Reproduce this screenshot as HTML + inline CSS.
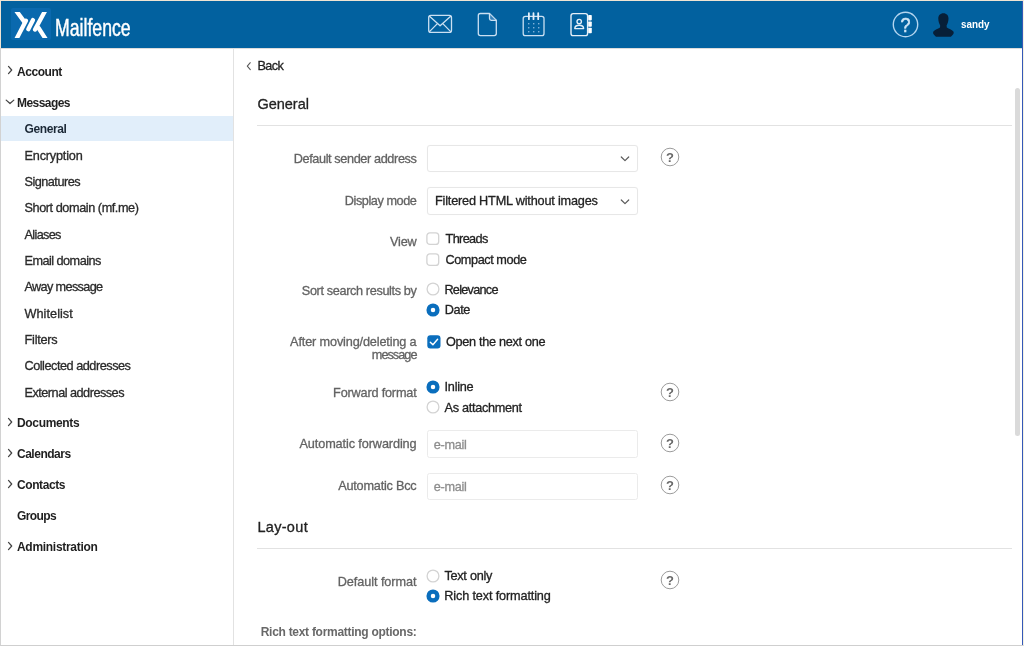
<!DOCTYPE html>
<html lang="en"><head><meta charset="utf-8"><title>Mailfence - Settings</title>
<style>
html,body{margin:0;padding:0;}
body{width:1024px;height:646px;overflow:hidden;position:relative;background:#fff;font-family:"Liberation Sans", sans-serif;}
.t{position:absolute;white-space:nowrap;line-height:16px;height:16px;-webkit-text-stroke:0.3px currentColor;}
.ab,.help{position:absolute;display:block;}
#app{position:absolute;left:0;top:0;width:1024px;height:646px;overflow:hidden;will-change:transform;}
#frame{position:absolute;left:0;top:0;width:1024px;height:646px;box-sizing:border-box;border-left:1px solid #d2d2d2;border-top:1px solid #efe4d3;border-bottom:1px solid #cfcfcf;border-right:1px solid #f3f1e2;pointer-events:none;z-index:9;}
#blueline{position:absolute;left:1022px;top:1px;width:1px;height:644px;background:#3558b8;z-index:8;}
#lefttop{position:absolute;left:0;top:0;width:1px;height:48px;background:#efe4d3;z-index:10;}
header,nav,main{display:block;}
h2.t{margin:0;font-weight:400;}
a.t{text-decoration:none;}
#hbar{position:absolute;left:1px;top:1px;width:1021px;height:47px;background:#02619f;}
#logobox{position:absolute;left:11px;top:8px;width:40px;height:32px;background:#0a69ae;border-radius:2px;}
#brand{position:absolute;left:55px;top:12.6px;font-size:23.5px;line-height:30px;color:#fff;transform-origin:0 50%;transform:scaleX(0.752);white-space:nowrap;-webkit-text-stroke:0.45px #fff;}
#navbg{position:absolute;left:1px;top:48px;width:232px;height:597px;background:#fff;border-right:1px solid #e2e2e2;}
#sel{position:absolute;left:1px;top:115.7px;width:232px;height:25.7px;background:#e1eefa;}
.hr{position:absolute;left:257px;width:755px;height:1px;background:#e2e2e2;}
.box{position:absolute;left:426.8px;width:210.8px;height:27.4px;box-sizing:border-box;border:1px solid #e7e7e7;border-radius:3px;background:#fff;box-shadow:0 0 1px rgba(0,0,0,.05);}
.inp{border-color:#ebebeb;border-radius:2.5px;box-shadow:none;}
#thumb{position:absolute;left:1015px;top:88px;width:5px;height:348px;border-radius:3px;background:#dadada;}
#topshadow{position:absolute;left:1px;top:48px;width:1021px;height:1px;background:#dcdcdc;}

#n_account{left:17.00px;top:63.50px;font-size:12px;font-weight:700;color:#1f1f1f;letter-spacing:-0.457px;-webkit-text-stroke:0;}
#n_messages{left:17.00px;top:94.50px;font-size:12px;font-weight:700;color:#1f1f1f;letter-spacing:-0.547px;-webkit-text-stroke:0;}
#n_general{left:24.50px;top:120.80px;font-size:12px;font-weight:700;color:#1b2836;letter-spacing:-0.386px;-webkit-text-stroke:0;}
#n_s0{left:24.50px;top:147.63px;font-size:12.7px;font-weight:400;color:#2a2a2a;letter-spacing:-0.195px;}
#n_s1{left:24.50px;top:173.96px;font-size:12.7px;font-weight:400;color:#2a2a2a;letter-spacing:-0.516px;}
#n_s2{left:24.50px;top:200.29px;font-size:12.7px;font-weight:400;color:#2a2a2a;letter-spacing:-0.434px;}
#n_s3{left:24.50px;top:226.62px;font-size:12.7px;font-weight:400;color:#2a2a2a;letter-spacing:-0.658px;}
#n_s4{left:24.50px;top:252.95px;font-size:12.7px;font-weight:400;color:#2a2a2a;letter-spacing:-0.532px;}
#n_s5{left:24.50px;top:279.28px;font-size:12.7px;font-weight:400;color:#2a2a2a;letter-spacing:-0.651px;}
#n_s6{left:24.50px;top:305.61px;font-size:12.7px;font-weight:400;color:#2a2a2a;letter-spacing:0.040px;}
#n_s7{left:24.50px;top:331.94px;font-size:12.7px;font-weight:400;color:#2a2a2a;letter-spacing:-0.221px;}
#n_s8{left:24.50px;top:358.27px;font-size:12.7px;font-weight:400;color:#2a2a2a;letter-spacing:-0.472px;}
#n_s9{left:24.50px;top:384.60px;font-size:12.7px;font-weight:400;color:#2a2a2a;letter-spacing:-0.506px;}
#n_t0{left:17.00px;top:414.70px;font-size:12px;font-weight:700;color:#1f1f1f;letter-spacing:-0.338px;-webkit-text-stroke:0;}
#n_t1{left:17.00px;top:445.70px;font-size:12px;font-weight:700;color:#1f1f1f;letter-spacing:-0.492px;-webkit-text-stroke:0;}
#n_t2{left:17.00px;top:476.70px;font-size:12px;font-weight:700;color:#1f1f1f;letter-spacing:-0.418px;-webkit-text-stroke:0;}
#n_t3{left:17.00px;top:507.70px;font-size:12px;font-weight:700;color:#1f1f1f;letter-spacing:-0.612px;-webkit-text-stroke:0;}
#n_t4{left:17.00px;top:538.70px;font-size:12px;font-weight:700;color:#1f1f1f;letter-spacing:-0.298px;-webkit-text-stroke:0;}
#m_back{left:257.40px;top:58.10px;font-size:12.7px;font-weight:400;color:#222;letter-spacing:-0.605px;}
#h_general{left:257.40px;top:95.80px;font-size:14.5px;font-weight:400;color:#222;letter-spacing:0.001px;-webkit-text-stroke:0.3px currentColor;}
#h_layout{left:257.40px;top:519.00px;font-size:14.5px;font-weight:400;color:#222;letter-spacing:0.318px;-webkit-text-stroke:0.3px currentColor;}
#l_sender{right:607.50px;top:150.60px;font-size:12.7px;font-weight:400;color:#636363;letter-spacing:-0.381px;}
#l_display{right:607.50px;top:193.30px;font-size:12.7px;font-weight:400;color:#636363;letter-spacing:-0.431px;}
#l_view{right:607.50px;top:234.40px;font-size:12.7px;font-weight:400;color:#636363;letter-spacing:-0.220px;}
#l_sort{right:607.50px;top:283.00px;font-size:12.7px;font-weight:400;color:#636363;letter-spacing:-0.364px;}
#l_after1{right:607.50px;top:334.00px;font-size:12.7px;font-weight:400;color:#636363;letter-spacing:-0.147px;}
#l_after2{right:607.50px;top:346.90px;font-size:12.7px;font-weight:400;color:#636363;letter-spacing:-0.969px;}
#l_fwd{right:607.50px;top:385.00px;font-size:12.7px;font-weight:400;color:#636363;letter-spacing:-0.187px;}
#l_autofwd{right:607.50px;top:435.50px;font-size:12.7px;font-weight:400;color:#636363;letter-spacing:-0.109px;}
#l_bcc{right:607.50px;top:478.00px;font-size:12.7px;font-weight:400;color:#636363;letter-spacing:-0.215px;}
#l_deffmt{right:607.50px;top:573.50px;font-size:12.7px;font-weight:400;color:#636363;letter-spacing:-0.063px;}
#l_rich{right:607.50px;top:624.00px;font-size:12px;font-weight:700;color:#686868;letter-spacing:-0.283px;-webkit-text-stroke:0;}
#o_filtered{left:435.00px;top:193.00px;font-size:12.7px;font-weight:400;color:#222;letter-spacing:-0.192px;}
#o_threads{left:445.50px;top:230.70px;font-size:12.7px;font-weight:400;color:#222;letter-spacing:-0.621px;}
#o_compact{left:445.50px;top:251.50px;font-size:12.7px;font-weight:400;color:#222;letter-spacing:-0.428px;}
#o_relev{left:444.40px;top:281.50px;font-size:12.7px;font-weight:400;color:#222;letter-spacing:-0.728px;}
#o_date{left:444.80px;top:302.30px;font-size:12.7px;font-weight:400;color:#222;letter-spacing:-0.428px;}
#o_open{left:446.00px;top:333.80px;font-size:12.7px;font-weight:400;color:#222;letter-spacing:-0.306px;}
#o_inline{left:444.60px;top:379.40px;font-size:12.7px;font-weight:400;color:#222;letter-spacing:-0.274px;}
#o_attach{left:444.60px;top:400.00px;font-size:12.7px;font-weight:400;color:#222;letter-spacing:-0.308px;}
#o_textonly{left:444.40px;top:567.50px;font-size:12.7px;font-weight:400;color:#222;letter-spacing:-0.253px;}
#o_richtext{left:444.30px;top:588.20px;font-size:12.7px;font-weight:400;color:#222;letter-spacing:-0.145px;}
#p_email1{left:433.70px;top:437.10px;font-size:12.7px;font-weight:400;color:#8e8e8e;letter-spacing:-0.291px;}
#p_email2{left:433.70px;top:478.70px;font-size:12.7px;font-weight:400;color:#8e8e8e;letter-spacing:-0.291px;}
#u_sandy{left:961.00px;top:15.80px;font-size:11px;font-weight:700;color:#fff;transform-origin:0 50%;transform:scaleX(0.8963);-webkit-text-stroke:0;}
</style></head><body><div id="app">
<header>
<div id="hbar"></div><div id="logobox"></div>
<svg class="ab" style="left:12px;top:10px" width="40" height="30" viewBox="12 10 40 30">
<defs><clipPath id="lc"><rect x="12" y="12" width="40" height="26"/></clipPath></defs>
<g clip-path="url(#lc)" stroke="#fff" stroke-width="4.3" stroke-linecap="round" fill="none">
<line x1="14.1" y1="7.9" x2="24.2" y2="21.6" stroke-width="4.3"/>
<line x1="15.0" y1="41.8" x2="25.9" y2="20.7"/>
<line x1="28.3" y1="29.2" x2="33.0" y2="20.1"/>
<line x1="35.05" y1="29.5" x2="46.7" y2="7.9"/>
<line x1="38.6" y1="28" x2="47.5" y2="41.8" stroke-width="4.2"/>
</g></svg>
<div id="brand">Mailfence</div>
<svg class="ab" style="left:427px;top:13px" width="27" height="22" viewBox="427 13 27 22" fill="none" stroke="#cbe0f2" stroke-width="1.3" stroke-linejoin="round" stroke-linecap="round">
<rect x="428.7" y="15.4" width="22.8" height="17" rx="2.2"/><path d="M429.5 16.3 L440.1 25.8 L450.7 16.3 M429.5 31.6 L437.4 23.6 M450.7 31.6 L442.8 23.6"/></svg>
<svg class="ab" style="left:476px;top:11px" width="23" height="27" viewBox="476 11 23 27" fill="none" stroke="#cbe0f2" stroke-width="1.3" stroke-linejoin="round" stroke-linecap="round">
<path d="M480.4 13.5 H489.5 L496.3 20.3 V33.5 Q496.3 35.6 494.2 35.6 H480.4 Q478.3 35.6 478.3 33.5 V15.6 Q478.3 13.5 480.4 13.5 Z"/><path d="M489.5 13.8 V18.6 Q489.5 20.3 491.2 20.3 H496" fill="#5b9bd0" fill-opacity="0.55"/></svg>
<svg class="ab" style="left:521px;top:11px" width="26" height="27" viewBox="521 11 26 27" fill="none" stroke="#cbe0f2" stroke-width="1.3" stroke-linejoin="round" stroke-linecap="round">
<rect x="523.2" y="16.4" width="20.8" height="19.2" rx="2.2"/>
<path d="M528.9 13.2 V19.2 M533.5 13.2 V19.2 M538.2 13.2 V19.2" stroke="#e4effa" stroke-width="1.8"/>
<g stroke="none" fill="#7fb0d8"><rect x="528" y="23" width="1.4" height="1.4"/><rect x="533" y="23" width="1.4" height="1.4"/><rect x="538" y="23" width="1.4" height="1.4"/>
<rect x="528" y="27" width="1.4" height="1.4"/><rect x="533" y="27" width="1.4" height="1.4"/><rect x="538" y="27" width="1.4" height="1.4"/>
<rect x="528" y="31" width="1.4" height="1.4"/><rect x="533" y="31" width="1.4" height="1.4"/><rect x="538" y="31" width="1.4" height="1.4"/></g></svg>
<svg class="ab" style="left:568px;top:11px" width="27" height="27" viewBox="568 11 27 27" fill="none" stroke="#e6f0f8" stroke-width="1.4" stroke-linejoin="round" stroke-linecap="round">
<rect x="571" y="13.6" width="16.6" height="22" rx="2.2"/>
<g stroke="none" fill="#fff"><rect x="588.2" y="15" width="3.6" height="5.4" rx="0.8"/><rect x="588.2" y="21.4" width="3.6" height="5.4" rx="0.8"/><rect x="588.2" y="27.8" width="3.6" height="5.4" rx="0.8"/></g>
<circle cx="579.2" cy="21.6" r="2.2"/><path d="M574.8 28.6 Q574.8 25.2 579.2 25.2 Q583.6 25.2 583.6 28.6 Z"/></svg>
<svg class="ab" style="left:891px;top:10px" width="29" height="29" viewBox="0 0 29 29"><circle cx="14.5" cy="14.5" r="12.2" fill="none" stroke="#b4d5ef" stroke-width="1.4"/>
<text x="14.5" y="21.8" text-anchor="middle" font-family="Liberation Sans, sans-serif" font-size="20" fill="#cfe5f6" stroke="#cfe5f6" stroke-width="0.5" transform="translate(14.5 0) scale(0.9 1) translate(-14.5 0)">?</text></svg>
<svg class="ab" style="left:931px;top:12px" width="25" height="26" viewBox="931 12 25 26"><path fill="#071f38" d="M943.4 13.3 C946.6 13.3 948.6 15.6 948.5 18.6 C948.4 21.6 947.6 24 946.6 25.4 L946.8 27.4 C949 28.6 951.8 29.8 953.2 31.2 C954 32.2 953.8 33.5 953 34.4 L951.4 36.2 C951 36.7 950.4 36.8 950 36.8 L936.8 36.8 C936.4 36.8 935.8 36.7 935.4 36.2 L933.8 34.4 C933 33.5 932.8 32.2 933.6 31.2 C935 29.8 937.8 28.6 940 27.4 L940.2 25.4 C939.2 24 938.4 21.6 938.3 18.6 C938.2 15.6 940.2 13.3 943.4 13.3 Z"/></svg>
<span class="t" id="u_sandy">sandy</span>
</header>
<nav><div id="navbg"></div><div id="sel"></div><div id="topshadow"></div>
<a class="t" id="n_account">Account</a>
<a class="t" id="n_messages">Messages</a>
<a class="t" id="n_general">General</a>
<a class="t" id="n_s0">Encryption</a>
<a class="t" id="n_s1">Signatures</a>
<a class="t" id="n_s2">Short domain (mf.me)</a>
<a class="t" id="n_s3">Aliases</a>
<a class="t" id="n_s4">Email domains</a>
<a class="t" id="n_s5">Away message</a>
<a class="t" id="n_s6">Whitelist</a>
<a class="t" id="n_s7">Filters</a>
<a class="t" id="n_s8">Collected addresses</a>
<a class="t" id="n_s9">External addresses</a>
<a class="t" id="n_t0">Documents</a>
<a class="t" id="n_t1">Calendars</a>
<a class="t" id="n_t2">Contacts</a>
<a class="t" id="n_t3">Groups</a>
<a class="t" id="n_t4">Administration</a>
<svg class="ab" style="left:6.0px;top:65.4px" width="8" height="10" viewBox="0 0 8 10"><path d="M2.5 1.4 L5.7 5 L2.5 8.6" fill="none" stroke="#444" stroke-width="1.25" stroke-linecap="round" stroke-linejoin="round"/></svg>
<svg class="ab" style="left:4.9px;top:97.8px" width="10" height="8" viewBox="0 0 10 8"><path d="M1.2 2.1 L5 5.5 L8.8 2.1" fill="none" stroke="#444" stroke-width="1.25" stroke-linecap="round" stroke-linejoin="round"/></svg>
<svg class="ab" style="left:6.0px;top:416.7px" width="8" height="10" viewBox="0 0 8 10"><path d="M2.5 1.4 L5.7 5 L2.5 8.6" fill="none" stroke="#444" stroke-width="1.25" stroke-linecap="round" stroke-linejoin="round"/></svg>
<svg class="ab" style="left:6.0px;top:447.8px" width="8" height="10" viewBox="0 0 8 10"><path d="M2.5 1.4 L5.7 5 L2.5 8.6" fill="none" stroke="#444" stroke-width="1.25" stroke-linecap="round" stroke-linejoin="round"/></svg>
<svg class="ab" style="left:6.0px;top:478.8px" width="8" height="10" viewBox="0 0 8 10"><path d="M2.5 1.4 L5.7 5 L2.5 8.6" fill="none" stroke="#444" stroke-width="1.25" stroke-linecap="round" stroke-linejoin="round"/></svg>
<svg class="ab" style="left:6.0px;top:540.8px" width="8" height="10" viewBox="0 0 8 10"><path d="M2.5 1.4 L5.7 5 L2.5 8.6" fill="none" stroke="#444" stroke-width="1.25" stroke-linecap="round" stroke-linejoin="round"/></svg>
</nav>
<main>
<svg class="ab" style="left:245.0px;top:61.3px" width="8" height="10" viewBox="0 0 8 10"><path d="M5.3 1.7 L2.3 5.2 L5.3 8.7" fill="none" stroke="#555" stroke-width="1.05" stroke-linecap="round" stroke-linejoin="round"/></svg>
<a class="t" id="m_back">Back</a>
<h2 class="t" id="h_general">General</h2>
<div class="hr" style="top:125px"></div>
<h2 class="t" id="h_layout">Lay-out</h2>
<div class="hr" style="top:548px"></div>
<label class="t" id="l_sender">Default sender address</label>
<label class="t" id="l_display">Display mode</label>
<label class="t" id="l_view">View</label>
<label class="t" id="l_sort">Sort search results by</label>
<label class="t" id="l_after1">After moving/deleting a</label>
<label class="t" id="l_after2">message</label>
<label class="t" id="l_fwd">Forward format</label>
<label class="t" id="l_autofwd">Automatic forwarding</label>
<label class="t" id="l_bcc">Automatic Bcc</label>
<label class="t" id="l_deffmt">Default format</label>
<label class="t" id="l_rich">Rich text formatting options:</label>
<div class="box" style="top:144.8px"></div>
<svg class="ab" style="left:619.2px;top:155.3px" width="12" height="8" viewBox="0 0 12 8"><path d="M2.3 2 L6 5.6 L9.7 2" fill="none" stroke="#5a5a5a" stroke-width="1.2" stroke-linecap="round" stroke-linejoin="round"/></svg>
<div class="box" style="top:187.3px"></div>
<svg class="ab" style="left:619.2px;top:197.8px" width="12" height="8" viewBox="0 0 12 8"><path d="M2.3 2 L6 5.6 L9.7 2" fill="none" stroke="#5a5a5a" stroke-width="1.2" stroke-linecap="round" stroke-linejoin="round"/></svg>
<label class="t" id="o_filtered">Filtered HTML without images</label>
<svg class="ab" style="left:426.2px;top:232.0px" width="14" height="14" viewBox="0 0 14 14"><rect x="0.9" y="0.8" width="11.8" height="11.6" rx="3" fill="#fff" stroke="#d3d3d3" stroke-width="1.3"/></svg>
<label class="t" id="o_threads">Threads</label>
<svg class="ab" style="left:426.2px;top:252.8px" width="14" height="14" viewBox="0 0 14 14"><rect x="0.9" y="0.8" width="11.8" height="11.6" rx="3" fill="#fff" stroke="#d3d3d3" stroke-width="1.3"/></svg>
<label class="t" id="o_compact">Compact mode</label>
<svg class="ab" style="left:426.2px;top:282.3px" width="14" height="14" viewBox="0 0 14 14"><circle cx="7" cy="7" r="5.9" fill="#fff" stroke="#d3d3d3" stroke-width="1.3"/></svg>
<label class="t" id="o_relev">Relevance</label>
<svg class="ab" style="left:426.2px;top:303.0px" width="14" height="14" viewBox="0 0 14 14"><circle cx="7" cy="7" r="6.55" fill="#0a6ebd"/><circle cx="7" cy="7" r="2.25" fill="#fff"/></svg>
<label class="t" id="o_date">Date</label>
<svg class="ab" style="left:426.5px;top:334.9px" width="14" height="14" viewBox="0 0 14 14"><rect x="0.3" y="0.3" width="13.2" height="13.2" rx="3" fill="#0a6ebd"/><path d="M3.3 7.2 L5.9 9.7 L10.6 4.3" fill="none" stroke="#fff" stroke-width="1.45" stroke-linecap="round" stroke-linejoin="round"/></svg>
<label class="t" id="o_open">Open the next one</label>
<svg class="ab" style="left:426.4px;top:379.5px" width="14" height="14" viewBox="0 0 14 14"><circle cx="7" cy="7" r="6.55" fill="#0a6ebd"/><circle cx="7" cy="7" r="2.25" fill="#fff"/></svg>
<label class="t" id="o_inline">Inline</label>
<svg class="ab" style="left:426.2px;top:400.0px" width="14" height="14" viewBox="0 0 14 14"><circle cx="7" cy="7" r="5.9" fill="#fff" stroke="#d3d3d3" stroke-width="1.3"/></svg>
<label class="t" id="o_attach">As attachment</label>
<div class="box inp" style="top:430.3px"></div>
<span class="t" id="p_email1">e-mail</span>
<div class="box inp" style="top:472.6px"></div>
<span class="t" id="p_email2">e-mail</span>
<svg class="ab" style="left:426.1px;top:568.6px" width="14" height="14" viewBox="0 0 14 14"><circle cx="7" cy="7" r="5.9" fill="#fff" stroke="#d3d3d3" stroke-width="1.3"/></svg>
<label class="t" id="o_textonly">Text only</label>
<svg class="ab" style="left:426.2px;top:589.0px" width="14" height="14" viewBox="0 0 14 14"><circle cx="7" cy="7" r="6.55" fill="#0a6ebd"/><circle cx="7" cy="7" r="2.25" fill="#fff"/></svg>
<label class="t" id="o_richtext">Rich text formatting</label>
<svg class="help" style="left:659.2px;top:146.0px" width="22" height="22" viewBox="0 0 22 22"><circle cx="11" cy="11" r="8.8" fill="#fff" stroke="#909090" stroke-width="0.9"/><text x="11" y="15.6" text-anchor="middle" font-family="Liberation Sans, sans-serif" font-size="13" font-weight="700" fill="#686868">?</text></svg>
<svg class="help" style="left:659.2px;top:381.0px" width="22" height="22" viewBox="0 0 22 22"><circle cx="11" cy="11" r="8.8" fill="#fff" stroke="#909090" stroke-width="0.9"/><text x="11" y="15.6" text-anchor="middle" font-family="Liberation Sans, sans-serif" font-size="13" font-weight="700" fill="#686868">?</text></svg>
<svg class="help" style="left:659.2px;top:431.5px" width="22" height="22" viewBox="0 0 22 22"><circle cx="11" cy="11" r="8.8" fill="#fff" stroke="#909090" stroke-width="0.9"/><text x="11" y="15.6" text-anchor="middle" font-family="Liberation Sans, sans-serif" font-size="13" font-weight="700" fill="#686868">?</text></svg>
<svg class="help" style="left:659.2px;top:473.8px" width="22" height="22" viewBox="0 0 22 22"><circle cx="11" cy="11" r="8.8" fill="#fff" stroke="#909090" stroke-width="0.9"/><text x="11" y="15.6" text-anchor="middle" font-family="Liberation Sans, sans-serif" font-size="13" font-weight="700" fill="#686868">?</text></svg>
<svg class="help" style="left:659.2px;top:569.1px" width="22" height="22" viewBox="0 0 22 22"><circle cx="11" cy="11" r="8.8" fill="#fff" stroke="#909090" stroke-width="0.9"/><text x="11" y="15.6" text-anchor="middle" font-family="Liberation Sans, sans-serif" font-size="13" font-weight="700" fill="#686868">?</text></svg>
</main>
<div id="thumb"></div><div id="blueline"></div><div id="frame"></div><div id="lefttop"></div>
</div></body></html>
